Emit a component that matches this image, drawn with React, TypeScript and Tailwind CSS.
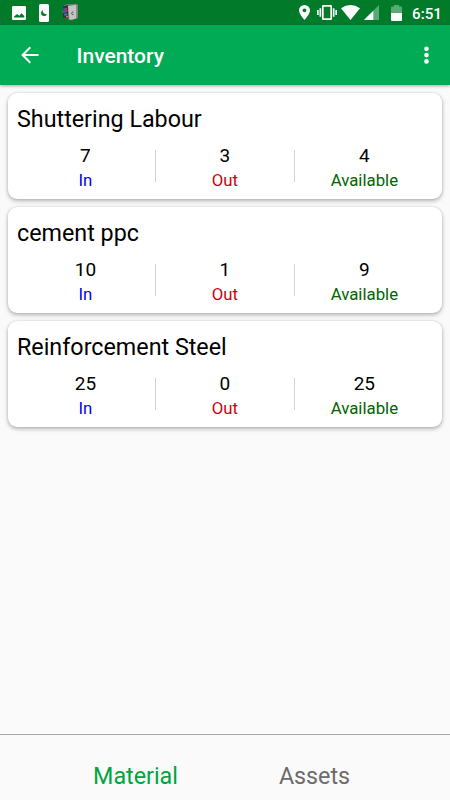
interface InventoryItem {
  name: string;
  incoming: number;
  outgoing: number;
  available: number;
}

const items: InventoryItem[] = [
  { name: "Shuttering Labour", incoming: 7, outgoing: 3, available: 4 },
  { name: "cement ppc", incoming: 10, outgoing: 1, available: 9 },
  { name: "Reinforcement Steel", incoming: 25, outgoing: 0, available: 25 },
];

function StatusBar() {
  return (
    <div className="flex h-[25px] shrink-0 items-center bg-[#017b2a] pr-[9px] pl-3 text-white">
      <svg className="h-[14px] w-[14px]" viewBox="0 0 14 14">
        <path
          fill="currentColor"
          fillRule="evenodd"
          d="M1.2 0h11.6Q14 0 14 1.2v11.6q0 1.2-1.2 1.2H1.2Q0 14 0 12.8V1.2Q0 0 1.2 0ZM2 11.6h10.2V10L9.6 7.2l-2.4 2.6-2-1.8L2 10.6Z"
        />
      </svg>
      <svg className="ml-[13px] h-[18px] w-[10px]" viewBox="0 0 10 18">
        <rect width="10" height="18" rx="1.5" fill="currentColor" />
        <path fill="#017b2a" d="M3.8 6C1.2 7.4 1.6 11.8 4.8 12.1 6.4 12.3 7.7 11.400 8.1 10 5.600 10.800 3.400 8.800 3.800 6Z" />
      </svg>
      <svg className="ml-[13px] h-[17px] w-[16px]" viewBox="0 0 16 17">
        <path fill="#77777b" d="M2 1.5 5 0h10l1 .8V14l-6 2.5L2 14Z" />
        <path fill="#35333a" d="M1 2.5 6 1v14l-5-1.5Z" />
        <path fill="#7b3f96" d="M1.5 4H5v2.5H1Z" />
        <path fill="#28808f" d="M0 7h4v1.5H.5Z" />
        <path fill="#a83a58" d="M3 6h2.5v2H3Z" />
        <path fill="#5068c4" d="M2 9.5h3.5v2H2Z" />
        <path fill="#b08a4c" d="M4 12h2v1.5H4Z" />
        <path fill="#c4c4c4" d="M6 2 14 .8v13.6L7.5 16Z" />
        <path
          d="M11.5 8q-1.8-.4-1.8 1.3t1.8 1.3"
          fill="none"
          stroke="#555"
          strokeWidth="1"
        />
        <path fill="#8d8d8d" d="M14 .8 15.5 1v13L14 14.6Z" />
      </svg>
      <svg className="ml-auto h-[15px] w-[11px]" viewBox="0 0 14 20" preserveAspectRatio="none">
        <path
          fill="currentColor"
          fillRule="evenodd"
          d="M7 0a7 7 0 0 0-7 7c0 5.25 7 13 7 13s7-7.75 7-13a7 7 0 0 0-7-7Zm0 9.5a2.5 2.5 0 1 1 0-5 2.5 2.5 0 0 1 0 5Z"
        />
      </svg>
      <svg className="ml-[7px] h-[15px] w-[20px]" viewBox="0 0 24 18" preserveAspectRatio="none">
        <path
          fill="currentColor"
          fillRule="evenodd"
          d="M0 12h2V6H0v6Zm3 2h2V4H3v10Zm19-8v6h2V6h-2Zm-3 8h2V4h-2v10ZM16.5 0h-9C6.67 0 6 .67 6 1.5v15c0 .83.67 1.5 1.5 1.5h9c.83 0 1.5-.67 1.5-1.5v-15c0-.83-.67-1.5-1.5-1.5ZM16 16H8V2h8v14Z"
        />
      </svg>
      <svg className="ml-[4px] h-[15px] w-[19px]" viewBox="0 0 19 15">
        <path fill="currentColor" d="M0 3.3Q9.5-3.3 19 3.3L9.5 15Z" />
      </svg>
      <svg className="ml-[4px] h-[15px] w-[15px]" viewBox="0 0 15 15">
        <path fill="currentColor" fillOpacity=".35" d="M15 0v15H0Z" />
        <path fill="currentColor" d="M9.3 5.7V15H0Z" />
      </svg>
      <svg className="ml-[12px] h-[16px] w-[11px]" viewBox="0 0 11 16">
        <path fill="currentColor" fillOpacity=".35" d="M0 8V2.5Q0 1.5 1 1.5h2V0h5v1.5h2q1 0 1 1V8Z" />
        <path fill="currentColor" d="M0 8h11v7q0 1-1 1H1q-1 0-1-1Z" />
      </svg>
      <span className="ml-[10px] w-[29px] pt-[4px] text-[15.2px] leading-none font-medium whitespace-nowrap">
        6:51
      </span>
    </div>
  );
}

function Header() {
  return (
    <header className="flex h-[60px] shrink-0 items-center bg-[#01aa54] px-[21px] text-white shadow-[0_1px_3px_rgba(60,20,60,0.4)]">
      <svg className="h-[18px] w-[18px]" viewBox="0 0 18 18">
        <path
          d="M17.5 9H2M9.3 1.3 1.6 9l7.7 7.7"
          fill="none"
          stroke="currentColor"
          strokeWidth="2"
        />
      </svg>
      <h1 className="ml-[37.5px] pt-[2px] text-[21px] leading-[26px] font-medium">Inventory</h1>
      <svg className="ml-auto h-[18px] w-[5px]" viewBox="0 0 5 18" fill="currentColor">
        <circle cx="2.5" cy="2.8" r="2.3" />
        <circle cx="2.5" cy="9.1" r="2.3" />
        <circle cx="2.5" cy="15.4" r="2.3" />
      </svg>
    </header>
  );
}

interface StatProps {
  value: number;
  label: string;
  className: string;
}

function Stat({ value, label, className }: StatProps) {
  return (
    <div className="flex flex-1 flex-col items-center">
      <span className="text-[19px] leading-[24px] text-black">{value}</span>
      <span className={`text-[16.8px] leading-[25px] ${className}`}>{label}</span>
    </div>
  );
}

function InventoryCard({ item }: { item: InventoryItem }) {
  return (
    <article className="h-[106px] rounded-[9px] bg-white pt-[11px] shadow-[0_2px_4px_rgba(0,0,0,0.28),0_0_2px_rgba(0,0,0,0.16)]">
      <h2 className="pl-[9px] text-[23.3px] leading-[30px] text-black">{item.name}</h2>
      <div className="mt-[10px] flex items-start pr-[8.4px] pl-[8.2px]">
        <Stat value={item.incoming} label="In" className="text-[#0000ee]" />
        <div className="mt-[6px] h-[32px] w-px bg-[#d3d3d3]" />
        <Stat value={item.outgoing} label="Out" className="text-[#cc0010]" />
        <div className="mt-[6px] h-[32px] w-px bg-[#d3d3d3]" />
        <Stat value={item.available} label="Available" className="text-[#006400]" />
      </div>
    </article>
  );
}

export default function App() {
  return (
    <div className="flex h-[800px] w-[450px] flex-col overflow-hidden bg-[#fafafa] font-[Roboto,sans-serif]">
      <StatusBar />
      <Header />
      <main className="flex flex-1 flex-col gap-[8px] px-[8px] pt-[8px]">
        {items.map((item) => (
          <InventoryCard key={item.name} item={item} />
        ))}
      </main>
      <nav className="flex h-[66px] shrink-0 items-start border-t border-[#a6a6a6] px-[46px] pt-[25px] text-[23.3px] leading-[32px]">
        <button className="flex-1 text-[#00a441]">Material</button>
        <button className="flex-1 text-[#6b6b6b]">Assets</button>
      </nav>
    </div>
  );
}
